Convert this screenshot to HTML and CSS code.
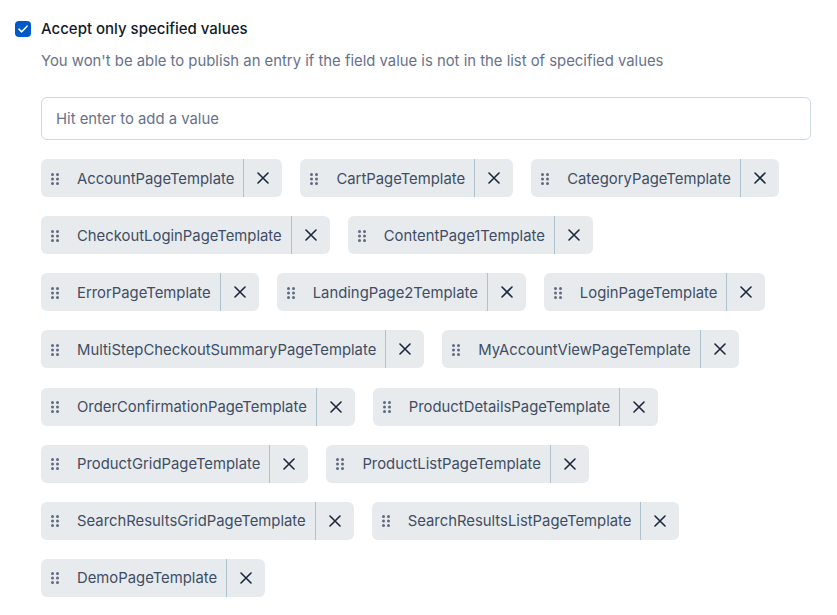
FILE: index.html
```html
<!DOCTYPE html>
<html>
<head>
<meta charset="utf-8">
<link rel="stylesheet" href="styles.css">
</head>
<body>
<div class="field">
  <label class="check-row">
    <span class="checkbox">
      <svg width="10" height="8" viewBox="0 0 10 8"><path d="M1 4.2 L3.7 6.8 L9 1.2" fill="none" stroke="#fff" stroke-width="1.6" stroke-linecap="round" stroke-linejoin="round"/></svg>
    </span>
    <span class="check-label">Accept only specified values</span>
  </label>
  <div class="body">
    <p class="help">You won't be able to publish an entry if the field value is not in the list of specified values</p>
    <input class="text-input" type="text" placeholder="Hit enter to add a value">
    <div class="pills" id="pills"></div>
  </div>
</div>
<script src="app.js"></script>
</body>
</html>
```

FILE: app.js
```js
const items = ["AccountPageTemplate","CartPageTemplate","CategoryPageTemplate","CheckoutLoginPageTemplate","ContentPage1Template","ErrorPageTemplate","LandingPage2Template","LoginPageTemplate","MultiStepCheckoutSummaryPageTemplate","MyAccountViewPageTemplate","OrderConfirmationPageTemplate","ProductDetailsPageTemplate","ProductGridPageTemplate","ProductListPageTemplate","SearchResultsGridPageTemplate","SearchResultsListPageTemplate","DemoPageTemplate"];
const wrap = document.getElementById('pills');
const drag = '<svg class="drag" width="8" height="12" viewBox="0 0 8 12"><circle cx="1.5" cy="1.5" r="1.5"/><circle cx="6.5" cy="1.5" r="1.5"/><circle cx="1.5" cy="6" r="1.5"/><circle cx="6.5" cy="6" r="1.5"/><circle cx="1.5" cy="10.5" r="1.5"/><circle cx="6.5" cy="10.5" r="1.5"/></svg>';
const x = '<svg width="12" height="12" viewBox="0 0 12 12"><path d="M1 1 L11 11 M11 1 L1 11" stroke="#1b273a" stroke-width="1.6" stroke-linecap="round"/></svg>';
items.forEach(t => {
  const d = document.createElement('div');
  d.className = 'pill';
  d.innerHTML = '<span class="pill-main">' + drag + '<span class="pill-text">' + t + '</span></span><button class="pill-close" aria-label="Remove">' + x + '</button>';
  wrap.appendChild(d);
});
```

FILE: styles.css
```css
* { box-sizing: border-box; }
html, body { margin: 0; padding: 0; background: #fff; }
body {
  font-family: Inter, "Noto Sans", sans-serif;
  color: #111b2b;
  font-size: 14.85px;
}
.field { padding: 19px 26px 0 15px; }
.check-row {
  display: flex;
  align-items: center;
  gap: 10px;
  height: 20px;
}
.checkbox {
  width: 16px;
  height: 16px;
  margin-top: -1px;
  border-radius: 4px;
  background: #0059c8;
  display: flex;
  align-items: center;
  justify-content: center;
}
.check-label {
  font-size: 15px;
  font-weight: 500;
  line-height: 20px;
  color: #111b2b;
}
.body { padding-left: 26px; }
.help {
  margin: 12px 0 0 0;
  line-height: 20px;
  color: #67728a;
  font-size: 14.85px;
}
.text-input {
  display: block;
  margin-top: 26px;
  width: 770px;
  height: 43px;
  border: 1px solid #cfd9e0;
  border-radius: 6px;
  padding: 0 14px;
  font-family: inherit;
  font-size: 14.85px;
  color: #111b2b;
  outline: none;
}
.text-input::placeholder { color: #67728a; }
.pills {
  display: flex;
  flex-wrap: wrap;
  gap: 19.15px 18px;
  margin-top: 19px;
}
.pill {
  display: flex;
  height: 38px;
  background: #e7ebee;
  border-radius: 6px;
}
.pill-main {
  display: flex;
  align-items: center;
  gap: 18px;
  padding: 1px 9px 0 10px;
}
.drag { fill: #5f6a80; }
.pill-text {
  color: #414d63;
  font-size: 14.85px;
  line-height: 20px;
}
.pill-close {
  width: 39px;
  border: 0;
  border-left: 1px solid #aec1cc;
  background: transparent;
  padding: 0;
  display: flex;
  align-items: center;
  justify-content: center;
}
```
